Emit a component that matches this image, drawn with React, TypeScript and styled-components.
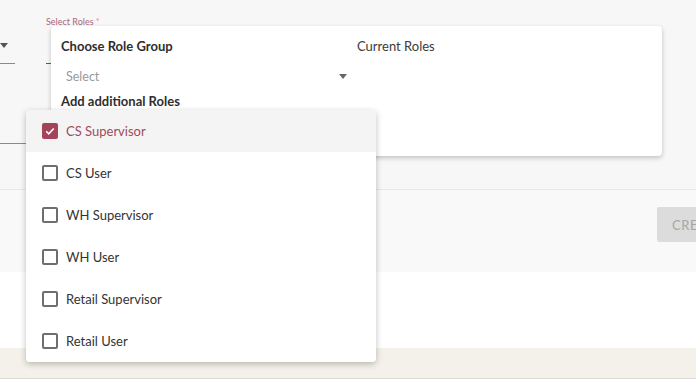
import styled, { createGlobalStyle } from 'styled-components';

const GlobalStyle = createGlobalStyle`
    html, body {
        margin: 0;
        padding: 0;
        background: #ffffff;
        overflow: hidden;
    }
    body {
        font-family: Lato, "Open Sans", sans-serif;
        color: #333333;
    }
`;

const Page = styled.div`
    position: relative;
    width: 696px;
    height: 380px;
    display: flex;
    flex-direction: column;
    overflow: hidden;
`;

const FormSection = styled.section`
    height: 190px;
    flex: none;
    background: #f7f7f7;
    border-bottom: 1px solid #f3e4dc;
    display: flex;
    flex-direction: column;
    gap: 44px;
    padding-top: 16px;
    box-sizing: border-box;
`;

const FieldRow = styled.div`
    display: flex;
    gap: 31px;
`;

const Field = styled.div<{ $width: number }>`
    width: ${(p) => p.$width}px;
    display: flex;
    flex-direction: column;
`;

const Label = styled.span`
    font-size: 9px;
    color: #a8687a;
    height: 12px;
    line-height: 12px;
    & b {
        color: #d9909e;
        font-weight: 400;
    }
`;

const Control = styled.div<{ $active?: boolean }>`
    height: 36px;
    border-bottom: 1px solid ${(p) => (p.$active ? '#9e3d52' : '#8a8a8a')};
    display: flex;
    align-items: center;
    justify-content: flex-end;
    box-sizing: border-box;
`;

const Caret = styled.span<{ $color?: string }>`
    width: 0;
    height: 0;
    border-left: 4.5px solid transparent;
    border-right: 4.5px solid transparent;
    border-top: 5px solid ${(p) => p.$color || '#666666'};
`;

const LeftCut = styled.div`
    margin-left: -4px;
`;

const ActionBar = styled.div`
    height: 82px;
    flex: none;
    background: #f9f9f9;
    display: flex;
    justify-content: flex-end;
    align-items: flex-start;
    padding-top: 17px;
    box-sizing: border-box;
`;

const CreateButton = styled.button`
    width: 120px;
    height: 35px;
    margin-right: -81px;
    border: none;
    border-radius: 2px;
    background: #dcdcdc;
    color: #a6a6a6;
    font-family: Lato, sans-serif;
    font-size: 13px;
    letter-spacing: 0.6px;
    text-align: left;
    padding-left: 15px;
`;

const Blank = styled.div`
    height: 76px;
    flex: none;
    background: #ffffff;
`;

const Footer = styled.footer`
    height: 31px;
    flex: none;
    background: #f4f1ea;
    border-bottom: 1px solid #dedbd5;
    box-sizing: border-box;
`;

const Popover = styled.div`
    position: absolute;
    left: 51px;
    top: 26px;
    width: 611px;
    height: 130px;
    background: #ffffff;
    border-radius: 4px;
    box-shadow: 0 2px 5px rgba(0, 0, 0, 0.22);
    display: flex;
    padding: 12px 10px 0;
    box-sizing: border-box;
`;

const Column = styled.div<{ $width?: number }>`
    width: ${(p) => (p.$width ? `${p.$width}px` : 'auto')};
    flex: ${(p) => (p.$width ? 'none' : '1')};
    display: flex;
    flex-direction: column;
`;

const Heading = styled.div<{ $bold?: boolean }>`
    font-size: 13px;
    line-height: 17px;
    font-weight: ${(p) => (p.$bold ? 700 : 400)};
    color: ${(p) => (p.$bold ? '#2e2e2e' : '#3a3a3a')};
`;

const SelectBox = styled.div`
    height: 38px;
    display: flex;
    align-items: center;
    justify-content: space-between;
    padding: 4px 10px 0 5px;
    box-sizing: border-box;
    font-size: 12.5px;
    color: #9a9a9a;
`;

const Menu = styled.ul`
    position: absolute;
    left: 26px;
    top: 110px;
    width: 350px;
    margin: 0;
    padding: 0;
    list-style: none;
    background: #ffffff;
    border-radius: 4px;
    box-shadow: 0 2px 6px rgba(0, 0, 0, 0.25);
    overflow: hidden;
`;

const MenuItem = styled.li<{ $checked?: boolean }>`
    height: 42px;
    display: flex;
    align-items: center;
    gap: 8px;
    padding-left: 16px;
    font-size: 13px;
    background: ${(p) => (p.$checked ? '#f4f4f4' : '#ffffff')};
    color: ${(p) => (p.$checked ? '#a14a5e' : '#333333')};
`;

const Box = styled.span<{ $checked?: boolean }>`
    width: 16px;
    height: 16px;
    box-sizing: border-box;
    border-radius: 2px;
    border: ${(p) => (p.$checked ? 'none' : '2px solid #6e6e6e')};
    background: ${(p) => (p.$checked ? '#a3445a' : 'transparent')};
    display: flex;
    align-items: center;
    justify-content: center;
`;

const roles = [
    { name: 'CS Supervisor', checked: true },
    { name: 'CS User', checked: false },
    { name: 'WH Supervisor', checked: false },
    { name: 'WH User', checked: false },
    { name: 'Retail Supervisor', checked: false },
    { name: 'Retail User', checked: false },
];

function App() {
    return (
        <Page>
            <GlobalStyle />
            <FormSection>
                <FieldRow>
                    <LeftCut>
                        <Field $width={19}>
                            <Label>&nbsp;</Label>
                            <Control>
                                <Caret $color="#555555" style={{ marginRight: 7 }} />
                            </Control>
                        </Field>
                    </LeftCut>
                    <Field $width={300}>
                        <Label>Select Roles <b>*</b></Label>
                        <Control $active />
                    </Field>
                </FieldRow>
                <FieldRow>
                    <Field $width={26}>
                        <Control />
                    </Field>
                </FieldRow>
            </FormSection>
            <ActionBar>
                <CreateButton>CREATE</CreateButton>
            </ActionBar>
            <Blank />
            <Footer />

            <Popover>
                <Column $width={296}>
                    <Heading $bold>Choose Role Group</Heading>
                    <SelectBox>
                        <span>Select</span>
                        <Caret />
                    </SelectBox>
                    <Heading $bold>Add additional Roles</Heading>
                </Column>
                <Column>
                    <Heading>Current Roles</Heading>
                </Column>
            </Popover>

            <Menu>
                {roles.map((r) => (
                    <MenuItem key={r.name} $checked={r.checked}>
                        <Box $checked={r.checked}>
                            {r.checked && (
                                <svg width="12" height="12" viewBox="0 0 24 24">
                                    <path d="M4.5 12.5l5 5L19.5 7" fill="none" stroke="#ffffff" strokeWidth="3.2" />
                                </svg>
                            )}
                        </Box>
                        {r.name}
                    </MenuItem>
                ))}
            </Menu>
        </Page>
    );
}

export default App;
